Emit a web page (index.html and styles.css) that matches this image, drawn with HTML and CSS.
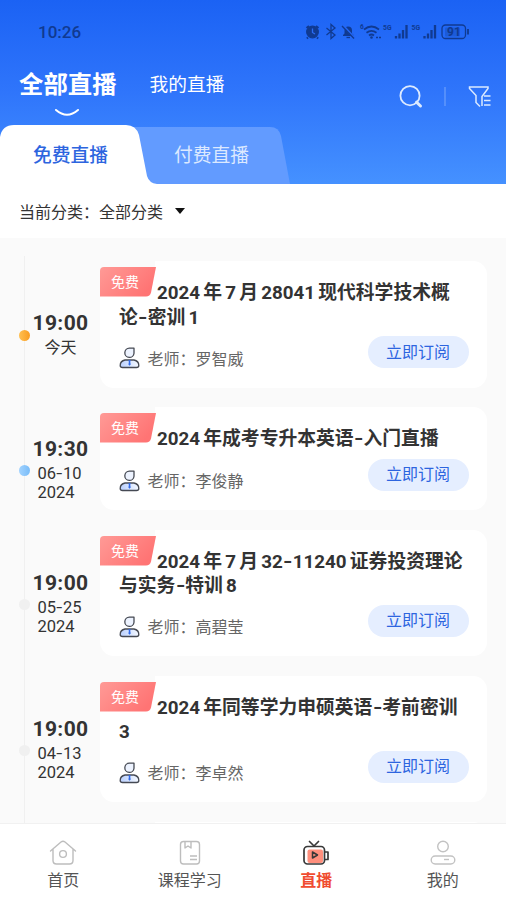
FILE: index.html
```html
<!DOCTYPE html>
<html lang="zh-CN">
<head>
<meta charset="utf-8">
<meta name="viewport" content="width=device-width, initial-scale=1">
<title>全部直播</title>
<link rel="stylesheet" href="styles.css">
</head>
<body>
<svg class="defs" width="0" height="0" aria-hidden="true">
  <defs>
    <linearGradient id="red" x1="0" y1="0" x2="1" y2="0.5"><stop offset="0" stop-color="#ff9a96"/><stop offset="1" stop-color="#ff7474"/></linearGradient>
    <linearGradient id="body" x1="0" y1="0" x2="1" y2="0"><stop offset="0" stop-color="#b9d0ff"/><stop offset="1" stop-color="#f4f8ff"/></linearGradient>
    <symbol id="badge" viewBox="0 0 56 36">
      <path d="M0 0H55V6H56L50 36H0Z" fill="#fafafa"/>
      <path d="M0 30H56V6L50 36H0Z" fill="#fff"/>
      <path d="M4 6H56L51 31.500Q50 35.500 46 35.500H0V10Q0 6 4 6Z" fill="url(#red)"/>
    </symbol>
    <symbol id="teacher" viewBox="0 0 20 22">
      <path d="M14.500 1.200V6.200A4.600 4.600 0 1 1 9.900 1.200Z" fill="#edf3ff" stroke="#454953" stroke-width="1.300" stroke-linejoin="round"/>
      <path d="M5.500 13H14.500Q19.300 14 19.300 18.500Q19.300 20.500 17 20.500H3Q.7 20.500 .7 18.500Q.7 14 5.500 13Z" fill="url(#body)" stroke="#454953" stroke-width="1.300"/>
      <path d="M8.500 13.200H11.500L10.700 14.700L11.200 17.500L10 18.700L8.900 17.500L9.400 14.700Z" fill="#3169e8"/>
    </symbol>
  </defs>
</svg>
<div class="app">
  <header class="header">
    <div class="status">
      <span class="clock">10:26</span>
      <svg class="status-icons" width="166" height="20" viewBox="0 0 166 20" fill="none" stroke="#103a91" stroke-width="1.300">
        <circle cx="7.500" cy="10" r="5.800" fill="#103a91"/><path d="M1.500 6L4 4M13.500 6L11 4M3 15.500L1.800 16.500M12 15.500L13.200 16.500" stroke-width="2"/><path d="M7.500 6.500V10.500L10 12" stroke="#2a6cf4"/>
        <path d="M21.500 6L30 13L26 16.500V2.500L30 6L21.500 13"/>
        <path d="M38 14V13L39.500 11.500V8.500Q40 4.500 43 4.500Q47 4.500 47 8.500V11.500L48.500 13V14Z" fill="#103a91" stroke="none"/><path d="M41.500 15.500H45"/><path d="M38 3.500L49.500 16" stroke="#2467f5" stroke-width="2.400"/><path d="M37 4L49 16.500"/>
        <path d="M59 7.500Q66.500 1.500 74 7.500M61.500 10.800Q66.500 7 71.500 10.800M64 13.500Q66.500 11.500 69 13.500" stroke-width="1.700"/><circle cx="66.500" cy="15.500" r="1.300" fill="#103a91" stroke="none"/><path d="M71 15.500H76" stroke-dasharray="2 1"/>
        <path d="M91 16.500V14M94.500 16.500V11.500M98 16.500V8M101.500 16.500V3M119.500 16.500V14M123 16.500V11.500M126.500 16.500V8M130 16.500V3" stroke-width="2.300"/>
        <rect x="137" y="3" width="23.500" height="13.500" rx="3.500"/><rect x="140" y="5.500" width="15" height="9" rx="1" fill="#103a91" opacity=".3" stroke="none"/><path d="M163 7V12.500" stroke-width="1.800"/>
        <g fill="#103a91" stroke="none" class="tiny"><text x="55" y="6.500" font-size="6.500">6</text><text x="78" y="8" font-size="7.500" textLength="8.500" lengthAdjust="spacingAndGlyphs">5G</text><text x="106.500" y="8" font-size="7.500" textLength="8.500" lengthAdjust="spacingAndGlyphs">5G</text><text x="142" y="14" font-size="12">91</text></g>
      </svg>
    </div>
    <div class="nav">
      <h1 class="heading">全部直播<svg class="smile" width="26" height="10" viewBox="0 0 26 10"><path d="M2 2Q13 11.500 24 2" fill="none" stroke="#fff" stroke-width="2" stroke-linecap="round"/></svg></h1>
      <span class="mine">我的直播</span>
      <svg class="tools" width="94" height="26" viewBox="0 0 94 26" fill="none" stroke="#dceaff" stroke-width="1.800">
        <circle cx="12" cy="10.700" r="9.600"/><path d="M18.500 17.200L22.500 21" stroke-width="3" stroke-linecap="round"/>
        <path d="M47 2V21" stroke="#6da0fc" stroke-width="1.200"/>
        <path d="M84 21V11.500L90 3.500V2H71.500V3.500L78 10.500V17.500L82 21.500" stroke-width="1.500"/><path d="M86 11H92.500M86 15.500H92.500M86 20H92.500" stroke-width="1.400"/>
      </svg>
    </div>
    <div class="tabs">
      <svg class="tab-shape" width="300" height="60" viewBox="0 0 300 60"><path d="M130 3H270Q279 3 281 12L290 60H130Z" fill="#629bff"/><path d="M0 60V13Q2 1 14 1H126Q136 1 139 11L147 52Q149 59 157 60Z" fill="#fff"/></svg>
      <span class="tab tab-on">免费直播</span><span class="tab">付费直播</span>
    </div>
  </header>
  <div class="filter"><span>当前分类：</span><span>全部分类</span><i class="caret"></i></div>
  <main class="list">
    <section class="row">
      <div class="when"><i class="dot dot-orange"></i><b>19:00</b><span class="today">今天</span></div>
      <article class="card"><svg class="badge" width="56" height="36"><use href="#badge"/></svg><span class="free">免费</span>
        <h2><span class="n first">2024</span>年<span class="n">7</span>月<span class="n">28041</span>现代科学技术概<br>论<span class="dash">-</span>密训<span class="n">1</span></h2>
        <div class="foot"><svg class="person" width="21" height="22"><use href="#teacher"/></svg><span class="name">老师：罗智威</span><button>立即订阅</button></div></article>
    </section>
    <section class="row short">
      <div class="when"><i class="dot dot-blue"></i><b>19:30</b><span class="date">06<span class="dash">-</span>10<br>2024</span></div>
      <article class="card"><svg class="badge" width="56" height="36"><use href="#badge"/></svg><span class="free">免费</span>
        <h2><span class="n first">2024</span>年成考专升本英语<span class="dash">-</span>入门直播</h2>
        <div class="foot"><svg class="person" width="21" height="22"><use href="#teacher"/></svg><span class="name">老师：李俊静</span><button>立即订阅</button></div></article>
    </section>
    <section class="row">
      <div class="when"><i class="dot"></i><b>19:00</b><span class="date">05<span class="dash">-</span>25<br>2024</span></div>
      <article class="card"><svg class="badge" width="56" height="36"><use href="#badge"/></svg><span class="free">免费</span>
        <h2><span class="n first">2024</span>年<span class="n">7</span>月<span class="n">32<span class="dash">-</span>11240</span>证券投资理论<br>与实务<span class="dash">-</span>特训<span class="n">8</span></h2>
        <div class="foot"><svg class="person" width="21" height="22"><use href="#teacher"/></svg><span class="name">老师：高碧莹</span><button>立即订阅</button></div></article>
    </section>
    <section class="row">
      <div class="when"><i class="dot"></i><b>19:00</b><span class="date">04<span class="dash">-</span>13<br>2024</span></div>
      <article class="card"><svg class="badge" width="56" height="36"><use href="#badge"/></svg><span class="free">免费</span>
        <h2><span class="n first">2024</span>年同等学力申硕英语<span class="dash">-</span>考前密训<br><span class="n line-start">3</span></h2>
        <div class="foot"><svg class="person" width="21" height="22"><use href="#teacher"/></svg><span class="name">老师：李卓然</span><button>立即订阅</button></div></article>
    </section>
    <section class="row"><div class="when"></div><article class="card"><svg class="badge" width="56" height="36"><use href="#badge"/></svg></article></section>
  </main>
  <footer class="bottom">
    <div class="item"><svg width="28" height="28" viewBox="0 0 28 28" fill="none" stroke="#bdbdbd" stroke-width="1.400" stroke-linecap="round" stroke-linejoin="round"><path d="M1.500 12L12 3Q14 1.500 16 3L26.500 12M4 10V21.500Q4 25 7.500 25H20.500Q24 25 24 21.500V10"/><circle cx="14" cy="15" r="3.400"/></svg><span>首页</span></div>
    <div class="item"><svg width="28" height="28" viewBox="0 0 28 28" fill="none" stroke="#bdbdbd" stroke-width="1.400" stroke-linejoin="round"><rect x="4.500" y="2.500" width="19" height="22.500" rx="3"/><path d="M9 2.500V9L12 7L15 9V2.500M14 17H21M14 20.500H21"/></svg><span>课程学习</span></div>
    <div class="item active"><svg width="28" height="28" viewBox="0 0 28 28" fill="none" stroke="#383838" stroke-width="1.700" stroke-linejoin="round" stroke-linecap="round"><rect x="5.500" y="10.500" width="15.500" height="13.500" rx="2" fill="#ff8f7d" stroke="none"/><path d="M7.500 2.500L12 7L16.500 2.500M23 13H26V20.500H23"/><rect x="2" y="7.500" width="20.500" height="17.500" rx="3.500"/><path d="M10.500 13V19L15.500 16Z" stroke-width="1.500"/></svg><span>直播</span></div>
    <div class="item"><svg width="28" height="28" viewBox="0 0 28 28" fill="none" stroke="#c2c2c2" stroke-width="1.400"><circle cx="14" cy="7.500" r="5.300"/><rect x="2.200" y="17" width="23.600" height="8" rx="4"/><path d="M15 20.500H20"/></svg><span>我的</span></div>
  </footer>
</div>
</body>
</html>
```
FILE: styles.css
```css
* { box-sizing: border-box; }
body { margin: 0; font-family: Roboto, "Noto Sans CJK SC", sans-serif; color: #333; }
.defs { position: absolute; }
.app { display: flex; flex-direction: column; width: 506px; height: 900px; overflow: hidden; background: #fafafa; }
.header { flex: none; height: 184px; display: flex; flex-direction: column; background: linear-gradient(#1b62f4, #2f75fb 50%, #4591ff); }
.status { height: 64px; padding: 22px 35px 0 38px; display: flex; justify-content: space-between; align-items: flex-start; }
.clock { font-size: 17px; line-height: 21px; font-weight: 500; color: #103a91; }
.tiny { font-family: Roboto, sans-serif; font-weight: 700; }
.nav { height: 60px; padding-left: 19px; display: flex; align-items: flex-start; color: #fff; }
.heading { position: relative; margin: 4px 33px 0 0; font-size: 24.400px; line-height: 34px; font-weight: 700; }
.smile { position: absolute; left: 35px; top: 40px; }
.mine { margin-top: 7px; font-size: 18.700px; line-height: 28px; }
.tools { margin: 21px 14px 0 auto; }
.tabs { position: relative; height: 60px; display: flex; }
.tab-shape { position: absolute; left: 0; top: 0; }
.tab { position: relative; width: 141px; text-align: center; font-size: 18.800px; line-height: 65px; color: #dce9ff; }
.tab-on { color: #2d65df; font-weight: 500; }
.filter { flex: none; height: 54px; background: #fff; display: flex; align-items: center; padding-left: 19px; font-size: 16px; }
.caret { margin-left: 12px; border: 5.500px solid transparent; border-top: 6.500px solid #111; border-bottom: 0; }
.list { flex: 1; min-height: 0; overflow: hidden; padding: 23px 19px 0 24px; display: flex; flex-direction: column; gap: 19.600px; background: linear-gradient(90deg, transparent 24px, #f0f0f0 24px, #f0f0f0 25.500px, transparent 25.500px) 0 18px no-repeat; }
.row { flex: none; height: 126.600px; display: flex; align-items: center; }
.short { height: 102.900px; }
.when { position: relative; width: 76px; margin-top: 22px; display: flex; flex-direction: column; align-items: center; padding-right: 3px; }
.when b { font-size: 21px; line-height: 26px; letter-spacing: .4px; }
.dot { position: absolute; left: -5px; top: calc(50% - 5px); width: 11px; height: 11px; border-radius: 50%; background: #f0f0f0; }
.dot-orange { background: linear-gradient(90deg, #ffc052, #f99c20); }
.dot-blue { background: linear-gradient(90deg, #a2d3ff, #79bcf8); }
.today { font-size: 16px; line-height: 24px; }
.date { margin: 3px 2px 1px 0; font-size: 16.500px; line-height: 18.700px; }
.dash { display: inline-block; transform: scaleX(1.3); margin: 0 1.300px; }
.card { position: relative; flex: 1; height: 100%; background: #fff; border-radius: 14px; padding: 20px 18.500px 19.500px 19px; display: flex; flex-direction: column; }
.badge { position: absolute; left: 0; top: 0; }
.free { position: absolute; left: 11px; top: 11px; font-size: 14px; line-height: 20px; color: #fff; }
h2 { margin: 0; font-size: 18.800px; line-height: 24.600px; font-weight: 700; white-space: nowrap; }
.n { margin: 0 3.200px; }
.first { margin-left: 38px; }
.line-start { margin-left: 0; }
.foot { margin-top: auto; height: 32px; display: flex; align-items: flex-end; }
.person { margin-bottom: -1px; }
.name { margin: 0 0 -2.500px 7.500px; font-size: 16px; line-height: 23px; color: #666; }
button { margin-left: auto; width: 101px; height: 32px; border: 0; border-radius: 16px; background: #e5eeff; color: #2d65df; font: 16px "Noto Sans CJK SC", sans-serif; padding: 0 0 3px; }
.bottom { flex: none; height: 77px; background: #fff; border-top: 1px solid #f1f1f1; display: flex; }
.item { flex: 1; display: flex; flex-direction: column; align-items: center; padding-top: 15px; font-size: 16px; line-height: 28px; color: #555; }
.active { color: #f04c30; font-weight: 700; }
```
